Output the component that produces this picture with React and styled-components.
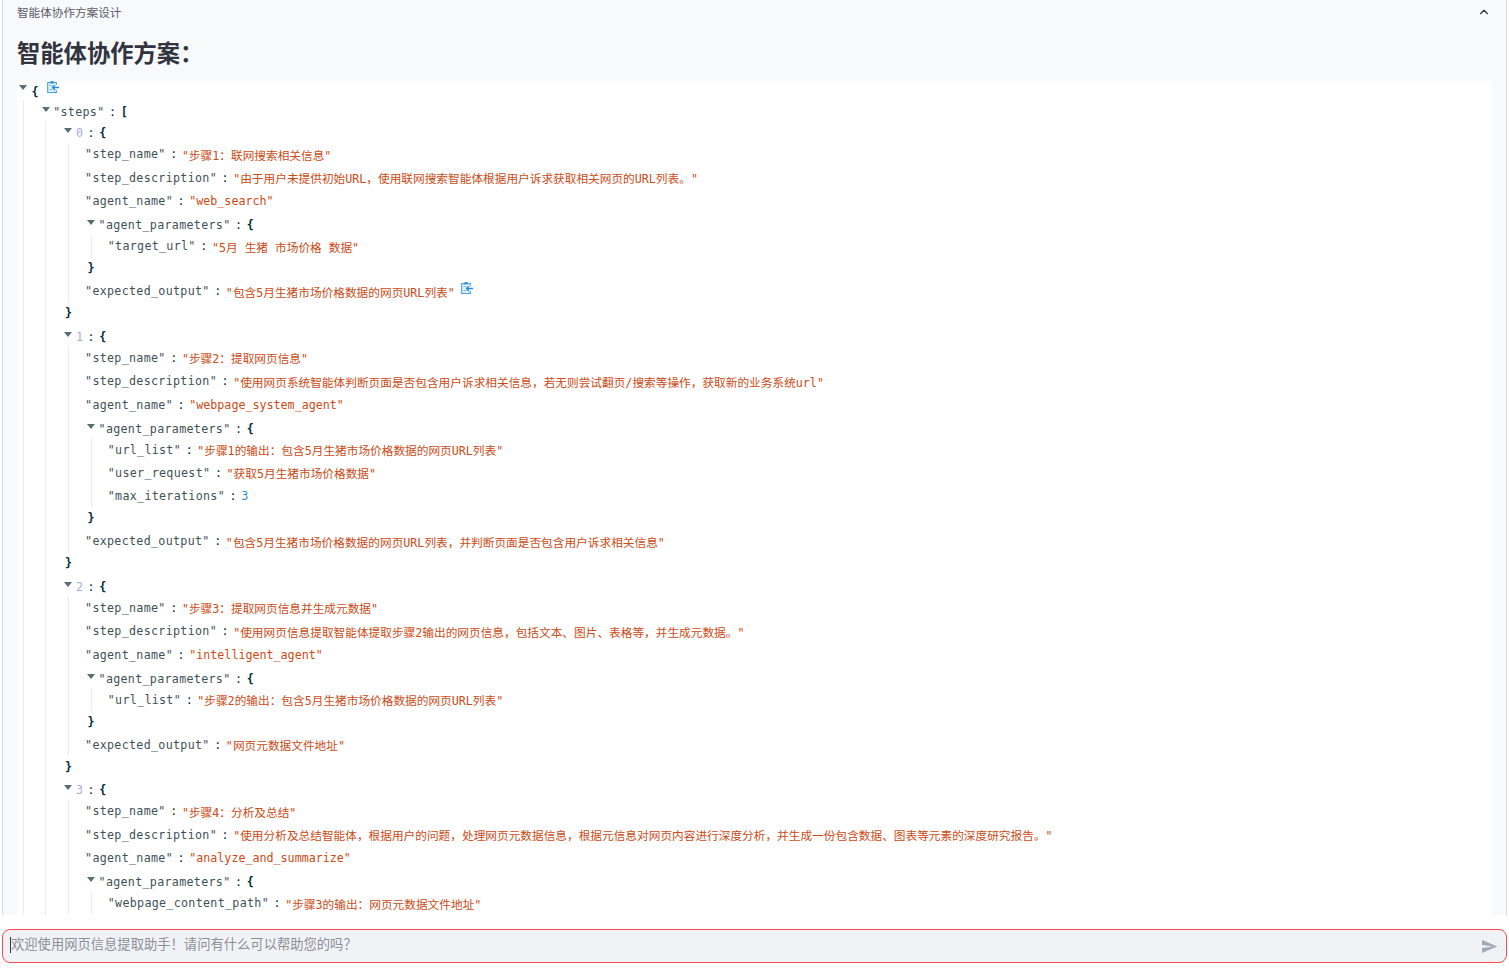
import React from 'react';
import styled, { createGlobalStyle } from 'styled-components';
import { ChevronUp } from 'lucide-react';

const plan = {
    steps: [
        {
            step_name: '步骤1\uff1a联网搜索相关信息',
            step_description: '由于用户未提供初始URL\uff0c使用联网搜索智能体根据用户诉求获取相关网页的URL列表。',
            agent_name: 'web_search',
            agent_parameters: { target_url: '5月 生猪 市场价格 数据' },
            expected_output: '包含5月生猪市场价格数据的网页URL列表',
        },
        {
            step_name: '步骤2\uff1a提取网页信息',
            step_description: '使用网页系统智能体判断页面是否包含用户诉求相关信息\uff0c若无则尝试翻页/搜索等操作\uff0c获取新的业务系统url',
            agent_name: 'webpage_system_agent',
            agent_parameters: {
                url_list: '步骤1的输出\uff1a包含5月生猪市场价格数据的网页URL列表',
                user_request: '获取5月生猪市场价格数据',
                max_iterations: 3,
            },
            expected_output: '包含5月生猪市场价格数据的网页URL列表\uff0c并判断页面是否包含用户诉求相关信息',
        },
        {
            step_name: '步骤3\uff1a提取网页信息并生成元数据',
            step_description: '使用网页信息提取智能体提取步骤2输出的网页信息\uff0c包括文本、图片、表格等\uff0c并生成元数据。',
            agent_name: 'intelligent_agent',
            agent_parameters: { url_list: '步骤2的输出\uff1a包含5月生猪市场价格数据的网页URL列表' },
            expected_output: '网页元数据文件地址',
        },
        {
            step_name: '步骤4\uff1a分析及总结',
            step_description: '使用分析及总结智能体\uff0c根据用户的问题\uff0c处理网页元数据信息\uff0c根据元信息对网页内容进行深度分析\uff0c并生成一份包含数据、图表等元素的深度研究报告。',
            agent_name: 'analyze_and_summarize',
            agent_parameters: { webpage_content_path: '步骤3的输出\uff1a网页元数据文件地址' },
        },
    ],
};

function CopyIcon({ root }) {
    return (
        <CopyGlyph $root={root} viewBox="0 0 12 13" aria-hidden="true">
            <path d="M2.8 2.5H.7v10h8.6V10M7.2 2.5h2.1V5" fill="#e4f1fb" stroke="#4a9fde" strokeWidth="1.1" />
            <path d="M2.8 1.4h1.4a1 1 0 0 1 1.6 0h1.4v2.2H2.8z" fill="#268bd2" />
            <path d="M2.4 5.6h3.2M2.4 9.6h3.2" stroke="#7ab8e6" strokeWidth="1" />
            <path d="M12 7.5H5.5M8 5l-2.5 2.5L8 10" fill="none" stroke="#268bd2" strokeWidth="1.3" />
        </CopyGlyph>
    );
}

function Leaf({ name, value, copyable }) {
    return (
        <LeafRow>
            <Key>"{name}"</Key>
            <Colon>:</Colon>
            {typeof value === 'number'
                ? <NumberValue>{value}</NumberValue>
                : <StringValue>"{value}"</StringValue>}
            {copyable && <CopyIcon />}
        </LeafRow>
    );
}

function Branch({ name, value, root }) {
    const isArray = Array.isArray(value);
    const isIndex = typeof name === 'number';
    const entries = Object.entries(value);

    return (
        <BranchBox $root={root}>
            <BranchHead>
                <CaretMark />
                {!root && (isIndex ? <IndexKey>{name}</IndexKey> : <Key>"{name}"</Key>)}
                {!root && <Colon>:</Colon>}
                <Brace $root={root}>{isArray ? '[' : '{'}</Brace>
                {root && <CopyIcon root />}
            </BranchHead>
            <Children>
                {entries.map(([k, v]) =>
                    typeof v === 'object'
                        ? <Branch key={k} name={isArray ? Number(k) : k} value={v} />
                        : <Leaf key={k} name={k} value={v} copyable={k === 'expected_output' && v === plan.steps[0].expected_output} />
                )}
            </Children>
            <Closing><Brace>{isArray ? ']' : '}'}</Brace></Closing>
        </BranchBox>
    );
}

export default function App() {
    return (
        <>
            <GlobalStyle />
            <Page>
                <Expander>
                    <ExpanderHead>
                        <span>智能体协作方案设计</span>
                        <ChevronUp size={14} strokeWidth={2} />
                    </ExpanderHead>
                    <Heading>{'智能体协作方案\uff1a'}</Heading>
                    <JsonView>
                        <Branch value={plan} root />
                    </JsonView>
                </Expander>
                <ChatBar>
                    <ChatInput>
                        <TextCursor />
                        <Placeholder>{'欢迎使用网页信息提取助手\uff01请问有什么可以帮助您的吗\uff1f'}</Placeholder>
                        <SendIcon viewBox="0 0 22 18" aria-hidden="true">
                            <path d="M0.01 18L21 9 0.01 0 0 7l15 2-15 2z" fill="currentColor" />
                        </SendIcon>
                    </ChatInput>
                </ChatBar>
            </Page>
        </>
    );
}

const GlobalStyle = createGlobalStyle`
    html, body {
        margin: 0;
        padding: 0;
        height: 100%;
        overflow: hidden;
        background: #fff;
    }
`;

const Page = styled.div`
    display: flex;
    flex-direction: column;
    height: 976px;
    font-family: "Noto Sans CJK SC", "Noto Sans", sans-serif;
    color: #31333f;
`;

const Expander = styled.section`
    box-sizing: border-box;
    height: 915px;
    margin: 0 2px;
    padding: 0 14px;
    overflow: hidden;
    background: #f8f9fb;
    border: solid #d9dade;
    border-width: 0 1px;
`;

const ExpanderHead = styled.div`
    display: flex;
    justify-content: space-between;
    align-items: center;
    height: 24px;
    font-size: 11.6px;
    color: #5a5c68;

    svg {
        margin-right: 1px;
        color: #31333f;
    }
`;

const Heading = styled.h2`
    margin: 0;
    height: 57px;
    padding-top: 3px;
    box-sizing: border-box;
    font-size: 23.3px;
    line-height: 50px;
    font-weight: 700;
    color: #31333f;
`;

const JsonView = styled.div`
    background: #fff;
    font-family: "DejaVu Sans Mono", "Noto Sans CJK SC", monospace;
    font-size: 11.68px;
    min-height: 900px;
`;

const BranchBox = styled.div`
    padding: ${(p) => (p.$root ? '0 0 1px' : '3px 0 1px')};
`;

const BranchHead = styled.div`
    display: flex;
    align-items: center;
    height: 18.6px;
    white-space: nowrap;
`;

const CaretMark = styled.span`
    width: 0;
    height: 0;
    margin: -5px 3.5px 0 2px;
    border-style: solid;
    border-width: 5px 4.5px 0;
    border-color: #586e75 transparent transparent;
`;

const Children = styled.div`
    margin-left: 5.5px;
    padding-left: 16.2px;
    border-left: 1px solid #ebebeb;
`;

const Closing = styled.div`
    display: flex;
    align-items: center;
    height: 20.6px;
    padding-left: 2.5px;
`;

const LeafRow = styled.div`
    display: flex;
    align-items: center;
    height: 23.4px;
    white-space: nowrap;
`;

const Key = styled.span`
    color: #3f5158;
    letter-spacing: 0.3px;
`;

const IndexKey = styled.span`
    color: #6c71c4;
    opacity: 0.6;
`;

const Colon = styled.span`
    margin: 0 4.6px;
    color: #002b36;
`;

const Brace = styled.span`
    margin: ${(p) => (p.$root ? '4px 0 0 1px' : '0')};
    font-weight: 700;
    color: #002b36;
`;

const StringValue = styled.span`
    color: #cb4b16;
    white-space: pre;
`;

const NumberValue = styled.span`
    color: #268bd2;
`;

const CopyGlyph = styled.svg`
    width: 12px;
    height: 13px;
    margin: -7px 0 0 ${(p) => (p.$root ? '8.5px' : '6.5px')};
    flex: none;
`;

const ChatBar = styled.div`
    padding: 14px 2px 0;
`;

const ChatInput = styled.div`
    display: flex;
    align-items: center;
    box-sizing: border-box;
    height: 34px;
    padding: 0 8px 0 7px;
    background: #f0f2f6;
    border: 1px solid #ff4b4b;
    border-radius: 8px;
    font-size: 13.3px;
`;

const TextCursor = styled.span`
    width: 1px;
    height: 16px;
    margin-bottom: 3px;
    background: #31333f;
`;

const Placeholder = styled.span`
    flex: 1;
    padding-bottom: 6px;
    color: #8d8f98;
`;

const SendIcon = styled.svg`
    width: 16px;
    height: 13px;
    color: #a3a8b8;
`;
